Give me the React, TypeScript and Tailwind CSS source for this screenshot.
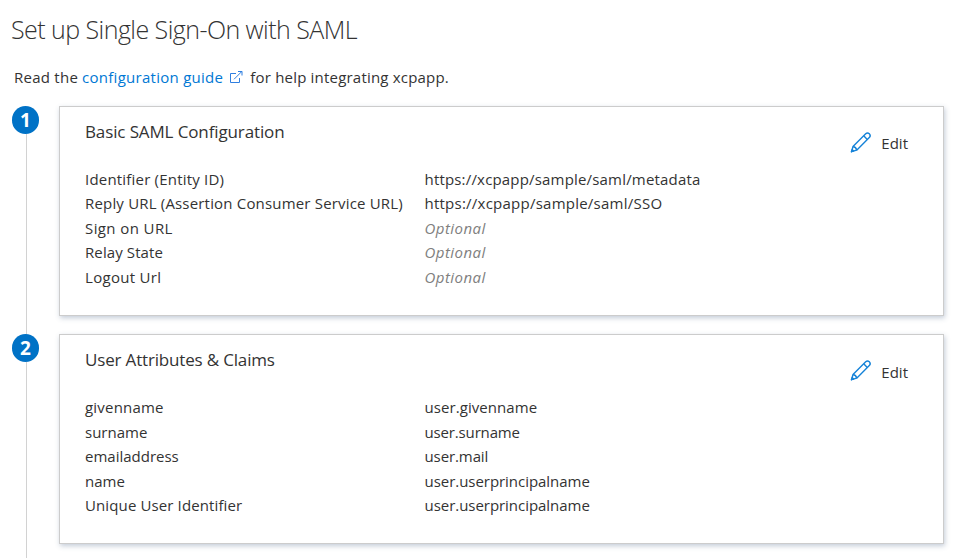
type Row = { label: string; value?: string; labelClass: string; valueClass?: string };

type Section = { step: number; title: string; titleClass: string; editClass: string; rows: Row[] };

const sections: Section[] = [
  {
    step: 1,
    title: "Basic SAML Configuration",
    titleClass: "tracking-[-0.125px]",
    editClass: "pt-0",
    rows: [
      { label: "Identifier (Entity ID)", value: "https://xcpapp/sample/saml/metadata", labelClass: "tracking-[0.2px]", valueClass: "tracking-[0.18px]" },
      { label: "Reply URL (Assertion Consumer Service URL)", value: "https://xcpapp/sample/saml/SSO", labelClass: "tracking-[0.18px]", valueClass: "tracking-[0.24px]" },
      { label: "Sign on URL", labelClass: "tracking-[0.4px]" },
      { label: "Relay State", labelClass: "tracking-[0.1px]" },
      { label: "Logout Url", labelClass: "tracking-[0.3px]" },
    ],
  },
  {
    step: 2,
    title: "User Attributes & Claims",
    titleClass: "tracking-[-0.17px]",
    editClass: "pt-[2px]",
    rows: [
      { label: "givenname", value: "user.givenname", labelClass: "tracking-[0.2px]", valueClass: "tracking-[0.07px]" },
      { label: "surname", value: "user.surname", labelClass: "", valueClass: "tracking-[-0.15px]" },
      { label: "emailaddress", value: "user.mail", labelClass: "", valueClass: "tracking-[-0.1px]" },
      { label: "name", value: "user.userprincipalname", labelClass: "", valueClass: "tracking-[-0.04px]" },
      { label: "Unique User Identifier", value: "user.userprincipalname", labelClass: "tracking-[0.12px]", valueClass: "tracking-[-0.04px]" },
    ],
  },
];

function PencilIcon() {
  return (
    <svg width="22" height="22" viewBox="0 0.8 22 22" fill="none" stroke="#1683d8" strokeWidth="1.4" strokeLinejoin="round">
      <path d="M1.5 20.5 3 15.3 15.7 2.6c1-1 2.6-1 3.6 0s1 2.7 0 3.7L6.7 19z" />
      <path d="M3 15.3c1.9.3 3.3 1.7 3.7 3.7M13.7 4.6l3.6 3.7" />
      <path d="M1.5 20.5l.6-2.1 1.5 1.5z" fill="#1683d8" />
    </svg>
  );
}

function ExternalLinkIcon() {
  return (
    <svg width="14" height="13" viewBox="0 0 14 13" fill="none" stroke="#2f7fe0" strokeWidth="1">
      <path d="M7 2.5H1.5v9h9V7M5 8.3 12.7.6M9 .5h4v4" />
    </svg>
  );
}

function StepCard({ section }: { section: Section }) {
  return (
    <section className="flex h-[210px]">
      <div className="flex w-[28px] shrink-0 flex-col items-start">
        <div className="flex h-7 w-[27px] items-center justify-center rounded-full bg-[#0072c6] text-[19px] leading-none font-bold text-white">
          {section.step}
        </div>
        <div className="-mb-[19px] ml-[14px] w-px flex-1 bg-[#d2d2d2]" />
      </div>
      <div className="ml-[19px] flex w-[885px] justify-between border border-[#cccccc] bg-white pr-[35px] pl-[25px] shadow-[1px_2px_5px_rgba(60,85,125,0.3)]">
        <div>
          <h2 className={`mt-[13px] h-[24px] text-[17px] leading-[24px] whitespace-nowrap ${section.titleClass}`}>{section.title}</h2>
          <dl className="mt-[22.8px]">
            {section.rows.map((row) => (
              <div key={row.label} className="flex h-[24.5px] text-[15px] leading-[24.5px] whitespace-nowrap">
                <dt className="w-[339.5px]">
                  <span className={row.labelClass}>{row.label}</span>
                </dt>
                <dd>
                  {row.value ? (
                    <span className={row.valueClass}>{row.value}</span>
                  ) : (
                    <span className="tracking-[0.45px] text-[#808080] italic">Optional</span>
                  )}
                </dd>
              </div>
            ))}
          </dl>
        </div>
        <button className="mt-[24px] flex h-[24px] items-center gap-[9px] text-[15px]">
          <PencilIcon />
          <span className={section.editClass}>Edit</span>
        </button>
      </div>
    </section>
  );
}

export default function App() {
  return (
    <main className="h-[558px] w-[959px] overflow-hidden bg-white font-['Open_Sans','Noto_Sans',sans-serif] text-[#333333]">
      <h1 className="ml-[11px] h-[60px] pt-[11px] text-[25px] leading-[36px] font-light tracking-[-0.55px] whitespace-nowrap">
        Set up Single Sign-On with SAML
      </h1>
      <p className="ml-[14px] flex h-[46px] items-start pt-[5px] text-[15px] leading-[24px] whitespace-nowrap">
        <span className="tracking-[0.25px]">Read the</span>
        <a className="ml-[4px] flex items-center text-[#0078d4]">
          <span className="tracking-[0.27px]">configuration guide</span>
          <span className="ml-[6px]">
            <ExternalLinkIcon />
          </span>
        </a>
        <span className="ml-[7px] tracking-[0.2px]">for help integrating xcpapp.</span>
      </p>
      <div className="ml-[12px] flex flex-col gap-[18.3px]">
        {sections.map((section) => (
          <StepCard key={section.step} section={section} />
        ))}
      </div>
    </main>
  );
}
